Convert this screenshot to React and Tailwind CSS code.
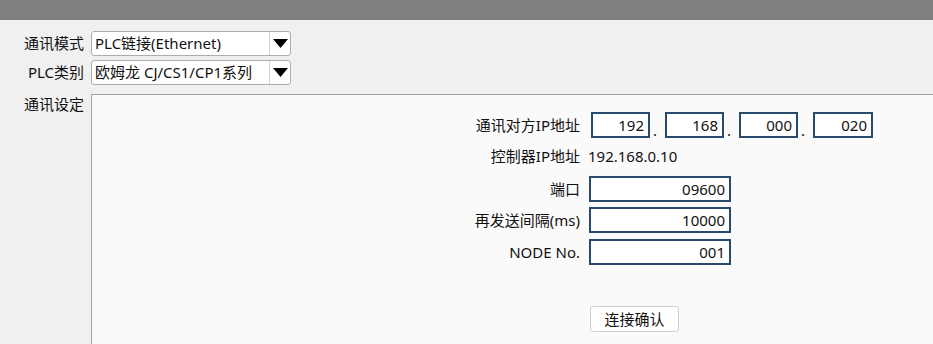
import React from 'react';

const font = { fontFamily: '"Noto Sans", "Noto Sans CJK SC", sans-serif' };

const Combo = ({ value }) => (
  <div className="flex h-[25px] w-[200px] items-stretch rounded-[3px] border border-[#adadad] bg-white">
    <div className="flex flex-1 items-center px-[3px] text-[15px] leading-none text-[#111]">{value}</div>
    <div className="flex w-[21px] items-center justify-center border-l border-[#d4d4d4]">
      <svg width="15" height="9" viewBox="0 0 15 9">
        <path d="M0 0 H15 L7.5 9 Z" fill="#000" />
      </svg>
    </div>
  </div>
);

const Box = ({ value, w }) => (
  <div className={`flex h-[26px] items-center justify-end border-2 border-[#274a6d] bg-white pr-[4px] text-[15px] leading-none text-[#111] ${w}`}>
    {value}
  </div>
);

const Dot = () => <span className="mx-[3px] w-[9px] text-[15px] leading-none text-[#111]">.</span>;

const Label = ({ children }) => (
  <div className="w-[488px] shrink-0 text-right text-[15px] leading-none text-[#111]">{children}</div>
);

export default function App() {
  return (
    <div style={font} className="flex h-[344px] w-[933px] flex-col overflow-hidden bg-[#f0f0f0]">
      <div className="h-[20px] shrink-0 bg-[#808080]" />

      <div className="mt-[11px] flex items-center gap-[7px]">
        <div className="w-[84px] text-right text-[15px] leading-none text-[#111]">通讯模式</div>
        <Combo value="PLC链接(Ethernet)" />
      </div>
      <div className="mt-[4px] flex items-center gap-[7px]">
        <div className="w-[84px] text-right text-[15px] leading-none text-[#111]">PLC类别</div>
        <Combo value="欧姆龙 CJ/CS1/CP1系列" />
      </div>

      <div className="mt-[9px] flex flex-1 gap-[7px]">
        <div className="w-[84px] pt-[3px] text-right text-[15px] leading-none text-[#111]">通讯设定</div>
        <div className="flex flex-1 flex-col border-l border-t border-[#a0a0a0] bg-[#fbfafb]">
          <div className="mt-[17px] flex items-center">
            <Label>通讯对方IP地址</Label>
            <div className="ml-[11px] flex items-end">
              <Box value="192" w="w-[59px]" />
              <Dot />
              <Box value="168" w="w-[59px]" />
              <Dot />
              <Box value="000" w="w-[59px]" />
              <Dot />
              <Box value="020" w="w-[60px]" />
            </div>
          </div>

          <div className="mt-[11px] flex items-center">
            <Label>控制器IP地址</Label>
            <div className="ml-[8px] text-[15px] leading-none text-[#111]">192.168.0.10</div>
          </div>

          <div className="mt-[12px] flex items-center">
            <Label>端口</Label>
            <div className="ml-[9px]"><Box value="09600" w="w-[142px]" /></div>
          </div>
          <div className="mt-[5px] flex items-center">
            <Label>再发送间隔(ms)</Label>
            <div className="ml-[9px]"><Box value="10000" w="w-[142px]" /></div>
          </div>
          <div className="mt-[6px] flex items-center">
            <Label>NODE No.</Label>
            <div className="ml-[9px]"><Box value="001" w="w-[142px]" /></div>
          </div>

          <div className="mt-[41px] flex">
            <div className="w-[488px] shrink-0" />
            <button className="ml-[10px] flex h-[26px] w-[89px] items-center justify-center rounded-[3px] border border-[#cfcfcf] bg-white text-[15px] leading-none text-[#111]">
              连接确认
            </button>
          </div>
        </div>
      </div>
    </div>
  );
}
